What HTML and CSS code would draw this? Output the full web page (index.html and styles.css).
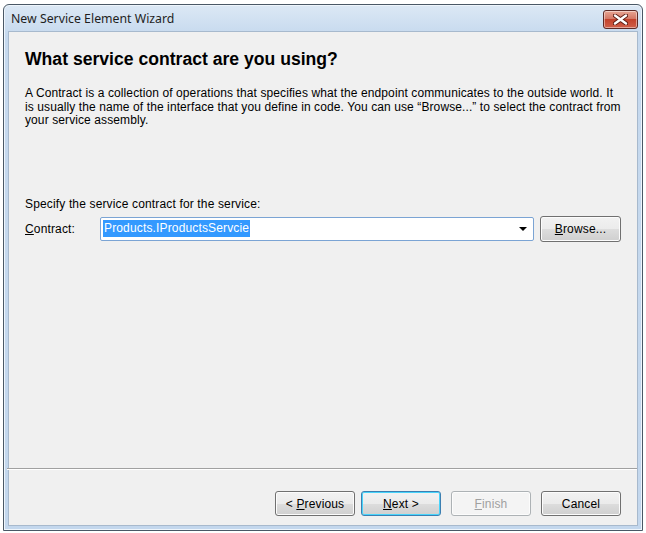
FILE: index.html
```html
<!DOCTYPE html>
<html>
<head>
    <title>New Service Element Wizard</title>
    <link rel="stylesheet" href="styles.css">
</head>
<body>
    <div class="window">
        <div class="titlebar">
            <span class="title">New Service Element Wizard</span>
            <div class="close-btn">
                <svg width="15" height="11" viewBox="0 0 15 11">
                    <path d="M2 1.5 L13 9.5 M13 1.5 L2 9.5" stroke="#5a1a12" stroke-width="4.2" stroke-linecap="round"/>
                    <path d="M2 1.5 L13 9.5 M13 1.5 L2 9.5" stroke="#fff" stroke-width="2.4" stroke-linecap="round"/>
                </svg>
            </div>
        </div>

        <div class="content">
            <div class="page">
                <h1>What service contract are you using?</h1>
                <p class="description">A Contract is a collection of operations that specifies what the endpoint communicates to the outside world. It is usually the name of the interface that you define in code. You can use &ldquo;Browse...&rdquo; to select the contract from your service assembly.</p>

                <p class="prompt">Specify the service contract for the service:</p>
                <div class="form-row">
                    <label for="contract"><u>C</u>ontract:</label>
                    <div class="combo" id="contract">
                        <span class="selected">Products.IProductsServcie</span>
                        <span class="arrow"></span>
                    </div>
                    <button type="button" class="btn browse"><u>B</u>rowse...</button>
                </div>
            </div>

            <div class="footer">
                <div class="separator"></div>
                <div class="buttons">
                    <button type="button" class="btn">&lt; <u>P</u>revious</button>
                    <button type="button" class="btn focused"><u>N</u>ext &gt;</button>
                    <button type="button" class="btn disabled"><u>F</u>inish</button>
                    <button type="button" class="btn">Cancel</button>
                </div>
            </div>
        </div>
    </div>
</body>
</html>
```

FILE: styles.css
```css
body {
    margin: 0;
    background-color: #fff;
    font-family: "Liberation Sans", Arial, sans-serif;
    font-size: 12px;
    letter-spacing: 0.15px;
    color: #000;
}

.window {
    margin: 4px 3px 0 3px;
    height: 525px;
    border: 1px solid #4a5866;
    border-radius: 6px 6px 0 0;
    background: linear-gradient(#dce8f5, #c6d9ee 30px, #c3d7ed);
    display: flex;
    flex-direction: column;
    box-shadow: inset 0 0 0 1px #eef5fc;
}

.titlebar {
    height: 26px;
    display: flex;
    align-items: center;
    justify-content: space-between;
    padding: 0 4px 0 7px;
}

.title {
    font-family: "Noto Sans", sans-serif;
    font-size: 12.3px;
    letter-spacing: 0;
    color: #1e1e1e;
    margin-top: 1px;
}

.close-btn {
    width: 33px;
    height: 17px;
    margin-top: 3px;
    border: 1px solid #5c2a26;
    border-radius: 3px;
    background: linear-gradient(#e8a593, #d47866 45%, #c3422c 50%, #d0604a);
    display: flex;
    align-items: center;
    justify-content: center;
    box-shadow: inset 0 0 0 1px rgba(255, 255, 255, 0.45);
}

.content {
    flex: 1;
    margin: 0 4px 4px 4px;
    background-color: #f0f0f0;
    border: 1px solid #a7b9cd;
    display: flex;
    flex-direction: column;
}

.page {
    flex: 1;
    padding: 0 16px 0 16px;
}

h1 {
    font-size: 17.6px;
    letter-spacing: 0;
    font-weight: bold;
    margin: 17px 0 0 0;
    line-height: 20px;
}

.description {
    margin: 18px 0 0 0;
    line-height: 13.5px;
    letter-spacing: 0.1px;
    width: 600px;
}

.prompt {
    margin: 70px 0 0 0;
    line-height: 13px;
}

.form-row {
    display: flex;
    align-items: center;
    margin-top: 5px;
}

label {
    width: 75px;
}

.combo {
    height: 24px;
    border: 1px solid #7ba4d4;
    border-radius: 2px;
    background-color: #fff;
    display: flex;
    align-items: center;
    justify-content: space-between;
    padding: 0 6px 0 2px;
    box-sizing: border-box;
    width: 434px;
}

.selected {
    background-color: #3399ff;
    color: #fff;
    padding: 2px 1px;
    line-height: 13px;
}

.arrow {
    width: 0;
    height: 0;
    border-left: 4px solid transparent;
    border-right: 4px solid transparent;
    border-top: 4px solid #000;
}

.btn {
    font-family: "Liberation Sans", Arial, sans-serif;
    font-size: 12px;
    letter-spacing: 0.15px;
    color: #000;
    width: 80px;
    height: 25px;
    padding: 0;
    border: 1px solid #707070;
    border-radius: 3px;
    background: linear-gradient(#f2f2f2, #ebebeb 50%, #dddddd 51%, #cfcfcf);
    box-shadow: inset 0 0 0 1px #fcfcfc;
}

.browse {
    margin-left: 6px;
    width: 81px;
    height: 26px;
}

.footer {
    padding-bottom: 9px;
}

.separator {
    border-top: 1px solid #a0a0a0;
    border-bottom: 1px solid #fff;
    margin: 0 0 0 -2px;
}

.buttons {
    display: flex;
    justify-content: flex-end;
    padding: 21px 16px 0 0;
}

.buttons .btn {
    margin-left: 6px;
}

.buttons .btn.disabled,
.buttons .btn:last-child {
    margin-left: 10px;
}

.focused {
    border-color: #3c7fb1;
    box-shadow: inset 0 0 0 1px #48d4fb;
}

.disabled {
    color: #a0a0a0;
    border-color: #adb2b5;
    background: #f4f4f4;
}
```
